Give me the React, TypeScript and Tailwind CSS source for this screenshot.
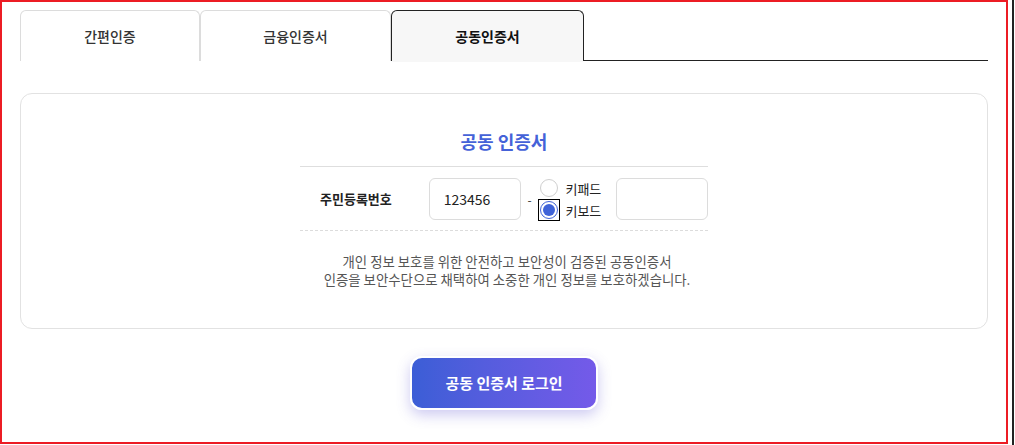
import React from "react";

const font = { fontFamily: '"Noto Sans CJK KR", "Noto Sans", sans-serif' };

function Radio({ checked, label }: { checked?: boolean; label: string }) {
  return (
    <div className="flex items-center h-[22px]">
      <div
        className={
          checked
            ? "w-[22px] h-[22px] flex items-center justify-center border border-black"
            : "w-[22px] h-[22px] flex items-center justify-center"
        }
      >
        <div
          className={
            checked
              ? "w-[18px] h-[18px] rounded-full border border-[#3f63d8] bg-white flex items-center justify-center"
              : "w-[18px] h-[18px] rounded-full border border-[#cfcfcf] bg-white"
          }
        >
          {checked && <div className="w-[12px] h-[12px] rounded-full bg-[#3f63d8]" />}
        </div>
      </div>
      <span className="ml-[5px] text-[13px] text-[#222] leading-none">{label}</span>
    </div>
  );
}

export default function App() {
  return (
    <div className="flex bg-white" style={font}>
      <div className="w-[1008px] h-[444px] border-2 border-[#ec1c24] px-[18px] pt-[8px] flex flex-col">
        {/* Tabs */}
        <div className="flex border-b border-[#222] h-[51px]">
          <div className="w-[180px] -mb-px border border-b-0 border-[#dcdcdc] rounded-t-[6px] bg-white flex items-center justify-center text-[14px] text-[#333] font-medium">
            간편인증
          </div>
          <div className="w-[191px] -mb-px border border-b-0 border-[#dcdcdc] rounded-t-[6px] bg-white flex items-center justify-center text-[14px] text-[#333] font-medium">
            금융인증서
          </div>
          <div className="w-[193px] -mb-px border border-b-0 border-[#222] rounded-t-[6px] bg-[#f7f7f7] flex items-center justify-center text-[14px] text-[#111] font-bold relative">
            <span>공동인증서</span>
            <div className="absolute left-0 right-0 -bottom-px h-px bg-[#f7f7f7]" />
          </div>
        </div>

        {/* Card */}
        <div className="mt-[32px] h-[236px] border border-[#e2e2e2] rounded-[12px] flex flex-col items-center">
          <div className="w-[408px] flex flex-col">
            <div className="pt-[34px] pb-[11px] text-center text-[18px] font-bold text-[#4562d8] leading-[27px] border-b border-[#dedede]">
              공동 인증서
            </div>
            <div className="flex items-center h-[64px] pt-[1px] border-b border-dashed border-[#dcdcdc]">
              <div className="w-[129px] pl-[20px] text-[13px] font-bold text-[#222]">주민등록번호</div>
              <div className="w-[92px] h-[42px] border border-[#dcdcdc] rounded-[6px] flex items-center pl-[14px] text-[14px] text-[#222]">
                123456
              </div>
              <div className="w-[18px] text-center text-[12px] text-[#333] mt-[2px]">-</div>
              <div className="flex flex-col w-[78px]">
                <Radio label="키패드" />
                <Radio checked label="키보드" />
              </div>
              <div className="w-[92px] h-[42px] border border-[#dcdcdc] rounded-[6px]" />
            </div>
          </div>
          <div className="pt-[21px] pl-[6px] text-center text-[13.4px] leading-[18px] text-[#555]">
            <div>개인 정보 보호를 위한 안전하고 보안성이 검증된 공동인증서</div>
            <div>인증을 보안수단으로 채택하여 소중한 개인 정보를 보호하겠습니다.</div>
          </div>
        </div>

        {/* Button */}
        <div className="flex justify-center mt-[27px]">
          <button className="w-[188px] h-[54px] rounded-[12px] border-2 border-white bg-gradient-to-r from-[#3b5ed6] to-[#745ae9] text-white text-[15px] font-bold shadow-[0_5px_14px_rgba(90,80,210,0.3)]">
            공동 인증서 로그인
          </button>
        </div>
      </div>
      <div className="w-[7px] h-[445px] border-r-2 border-[#222] ml-[-1px]" />
    </div>
  );
}
